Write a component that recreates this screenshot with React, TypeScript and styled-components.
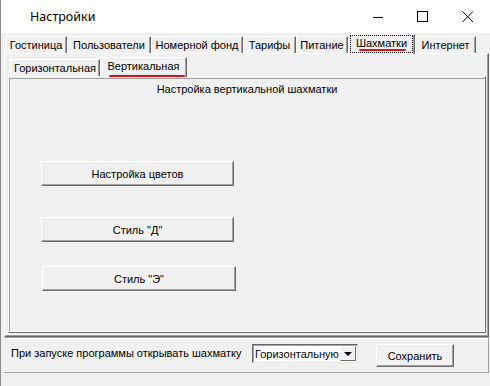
import React from 'react';
import styled, { createGlobalStyle } from 'styled-components';

const GlobalStyle = createGlobalStyle`
  * { box-sizing: border-box; }
  html, body { margin: 0; padding: 0; background: #f0f0f0; }
  body {
    font-family: "Liberation Sans", Arial, sans-serif;
    font-size: 11px;
    color: #000;
  }
`;

const Window = styled.div`
  width: 490px;
  height: 386px;
  background: #f0f0f0;
  border-left: 1px solid #8a8a8a;
  display: flex;
  flex-direction: column;
  overflow: hidden;
`;

const TitleBar = styled.div`
  height: 33px;
  background: #fff;
  display: flex;
  align-items: center;
  flex-shrink: 0;
`;

const Title = styled.div`
  flex: 1;
  padding-left: 29px;
  font-family: "Noto Sans", "Open Sans", sans-serif;
  font-size: 12.5px;
  color: #000;
`;

const Control = styled.div`
  width: 45px;
  height: 33px;
  display: flex;
  align-items: center;
  justify-content: center;
`;

const Body = styled.div`
  flex: 1;
  padding: 1px 1px 0 3px;
  display: flex;
  flex-direction: column;
`;

const TabStrip = styled.div<{ $pad: number }>`
  display: flex;
  align-items: flex-end;
  height: 19px;
  padding-left: ${(p) => p.$pad}px;
  position: relative;
  z-index: 1;
`;

const Tab = styled.div<{ $w: number; $active?: boolean }>`
  position: relative;
  width: ${(p) => p.$w}px;
  height: ${(p) => (p.$active ? 20 : 17)}px;
  margin-bottom: ${(p) => (p.$active ? -1 : 0)}px;
  background: #f0f0f0;
  border-top: 1px solid #fff;
  border-left: 1px solid #fff;
  border-right: 1px solid #696969;
  box-shadow: inset -1px 0 0 #a0a0a0;
  display: flex;
  align-items: flex-start;
  justify-content: center;
  padding-top: 2px;
  line-height: 12px;
  white-space: nowrap;
`;

const FocusText = styled.span<{ $focus?: boolean }>`
  padding: ${(p) => (p.$focus ? '1px 5px 3px' : '0 1px')};
  margin-top: ${(p) => (p.$focus ? -1 : 0)}px;
  outline: ${(p) => (p.$focus ? '1px dotted #000' : 'none')};
`;

const RedMark = styled.div<{ $left: number; $width: number; $bottom: number }>`
  position: absolute;
  left: ${(p) => p.$left}px;
  width: ${(p) => p.$width}px;
  bottom: ${(p) => p.$bottom}px;
  height: 2px;
  background: #e0101a;
  border-radius: 1px;
`;

const Panel = styled.div<{ $h: number }>`
  height: ${(p) => p.$h}px;
  border-top: 1px solid #fff;
  border-left: 1px solid #fff;
  border-right: 1px solid #696969;
  border-bottom: 1px solid #696969;
  box-shadow: inset -1px -1px 0 #a0a0a0;
  display: flex;
  flex-direction: column;
`;

const OuterInner = styled.div`
  padding: 3px 2px 0 3px;
  display: flex;
  flex-direction: column;
`;

const Frame = styled.div`
  flex: 1;
  margin: 1px 0 0 0;
  border-top: 1px solid #a0a0a0;
  border-left: 1px solid #a0a0a0;
  border-right: 1px solid #fff;
  border-bottom: 1px solid #fff;
  display: flex;
  flex-direction: column;
  align-items: flex-start;
`;

const FrameTitle = styled.div`
  align-self: stretch;
  text-align: center;
  padding-top: 4px;
  line-height: 13px;
`;

const Button = styled.div<{ $w: number; $h: number; $top: number; $left: number }>`
  width: ${(p) => p.$w}px;
  height: ${(p) => p.$h}px;
  margin-top: ${(p) => p.$top}px;
  margin-left: ${(p) => p.$left}px;
  background: #f0f0f0;
  border-top: 1px solid #fff;
  border-left: 1px solid #fff;
  border-right: 1px solid #696969;
  border-bottom: 1px solid #696969;
  box-shadow: inset -1px -1px 0 #a0a0a0;
  display: flex;
  align-items: center;
  justify-content: center;
  line-height: 12px;
  flex-shrink: 0;
`;

const BottomBar = styled.div`
  height: 36px;
  width: 485px;
  border-top: 1px solid #a0a0a0;
  border-bottom: 1px solid #a0a0a0;
  border-right: 1px solid #a0a0a0;
  box-shadow: inset 0 1px 0 #fff;
  display: flex;
  align-items: flex-start;
  padding: 6px 0 0 7px;
`;

const Label = styled.div`
  margin-top: 3px;
  width: 241px;
  line-height: 12px;
  white-space: nowrap;
`;

const Select = styled.div`
  width: 106px;
  height: 19px;
  background: #fff;
  border-top: 1px solid #696969;
  border-left: 1px solid #696969;
  border-right: 1px solid #e3e3e3;
  border-bottom: 1px solid #e3e3e3;
  box-shadow: inset 1px 1px 0 #a0a0a0;
  display: flex;
  align-items: center;
`;

const SelectText = styled.div`
  flex: 1;
  padding-left: 2px;
  line-height: 12px;
  white-space: nowrap;
  overflow: hidden;
`;

const Arrow = styled.div`
  width: 16px;
  height: 15px;
  margin-right: 1px;
  background: #f0f0f0;
  border-top: 1px solid #fff;
  border-left: 1px solid #fff;
  border-right: 1px solid #696969;
  border-bottom: 1px solid #696969;
  display: flex;
  align-items: center;
  justify-content: center;
`;

const Caret = styled.div`
  width: 0;
  height: 0;
  border-left: 4px solid transparent;
  border-right: 4px solid transparent;
  border-top: 4px solid #000;
`;

const outerTabs = [
  { title: 'Гостиница', w: 62 },
  { title: 'Пользователи', w: 84 },
  { title: 'Номерной фонд', w: 92 },
  { title: 'Тарифы', w: 53 },
  { title: 'Питание', w: 52 },
  { title: 'Шахматки', w: 67, active: true },
  { title: 'Интернет', w: 61 },
];

const App: React.FC = () => {
  return (
    <>
      <GlobalStyle />
      <Window>
        <TitleBar>
          <Title>Настройки</Title>
          <Control>
            <svg width="12" height="12" viewBox="0 0 12 12">
              <line x1="1" y1="6.5" x2="11" y2="6.5" stroke="#000" strokeWidth="1" />
            </svg>
          </Control>
          <Control>
            <svg width="12" height="12" viewBox="0 0 12 12">
              <rect x="0.5" y="0.5" width="10" height="10" fill="none" stroke="#000" strokeWidth="1" />
            </svg>
          </Control>
          <Control>
            <svg width="12" height="12" viewBox="0 0 12 12">
              <path d="M0.5 0.5 L11 11 M11 0.5 L0.5 11" stroke="#000" strokeWidth="1" />
            </svg>
          </Control>
        </TitleBar>
        <Body>
          <TabStrip $pad={1}>
            {outerTabs.map((t) => (
              <Tab key={t.title} $w={t.w} $active={t.active}>
                <FocusText $focus={t.active}>{t.title}</FocusText>
                {t.active && <RedMark $left={10} $width={47} $bottom={3} />}
              </Tab>
            ))}
          </TabStrip>
          <Panel $h={284}>
            <OuterInner>
              <TabStrip $pad={2}>
                <Tab $w={90}>Горизонтальная</Tab>
                <Tab $w={87} $active>
                  Вертикальная
                  <RedMark $left={8} $width={76} $bottom={0} />
                </Tab>
              </TabStrip>
              <Panel $h={257}>
                <Frame>
                  <FrameTitle>Настройка вертикальной шахматки</FrameTitle>
                  <Button $w={193} $h={25} $top={65} $left={31}>Настройка цветов</Button>
                  <Button $w={193} $h={25} $top={31} $left={31}>Стиль "Д"</Button>
                  <Button $w={194} $h={25} $top={24} $left={32}>Стиль "Э"</Button>
                </Frame>
              </Panel>
            </OuterInner>
          </Panel>
          <BottomBar>
            <Label>При запуске программы открывать шахматку</Label>
            <Select>
              <SelectText>Горизонтальную</SelectText>
              <Arrow>
                <Caret />
              </Arrow>
            </Select>
            <Button $w={78} $h={23} $top={0} $left={18}>Сохранить</Button>
          </BottomBar>
        </Body>
      </Window>
    </>
  );
};

export default App;
